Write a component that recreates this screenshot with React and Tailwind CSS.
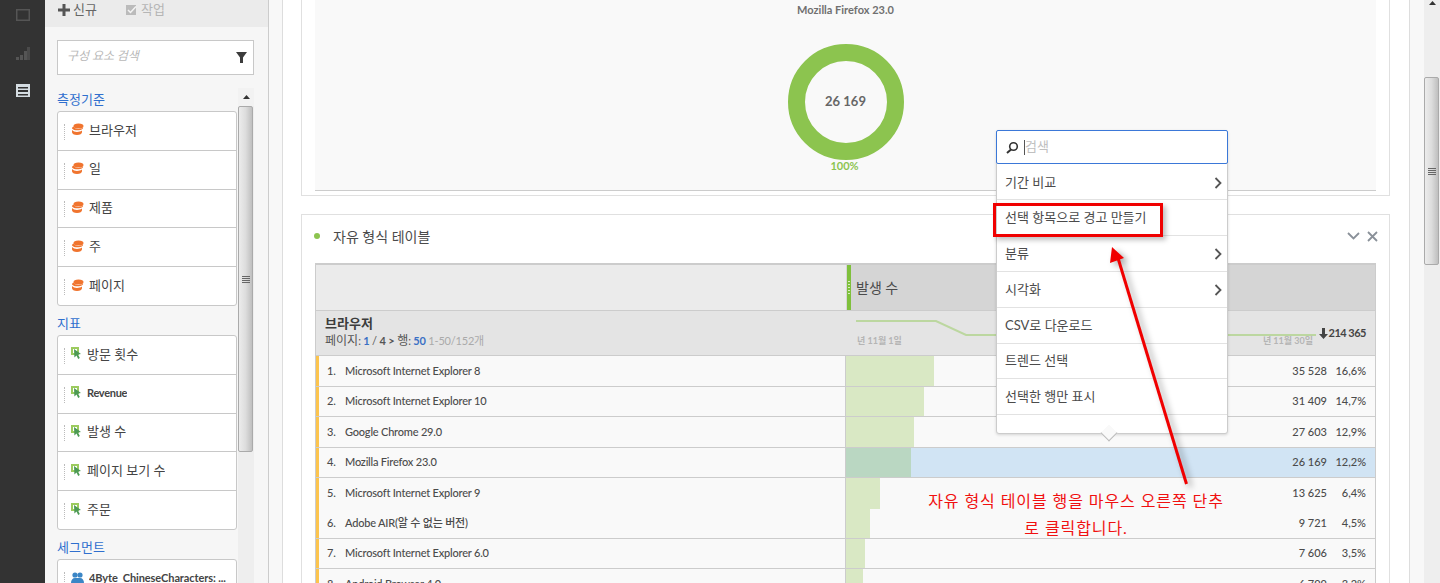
import React from "react";

const Db = () => (
  <svg width="13" height="12" viewBox="0 0 13 12" className="shrink-0">
    <ellipse cx="7.5" cy="3" rx="5" ry="2.6" fill="#f0742e" />
    <path d="M1 5.5c0-1 .8-1.6 1.6-1.9C3 5.2 5 6 7.5 6c2 0 3.6-.5 4.5-1.2v.6C10.600 7 8 7.300 6.500 7.300 4 7.300 2 6.800 1 5.500z" fill="#f0742e" />
    <path d="M1 7v2.300C1 10.800 3 12 6 12c3 0 5-1.200 5-2.800V7.500C9.500 8.500 8 8.900 6 8.900 4 8.900 2 8.300 1 7z" fill="#f0742e" />
  </svg>
);

const Cur = () => (
  <svg width="11" height="12" viewBox="0 0 11 12" className="shrink-0">
    <rect x="0" y="0" width="8" height="8" fill="#9ccb5e" />
    <rect x="2" y="2" width="4" height="4" fill="#ffffff" />
    <path d="M3 2l7 5-3 .6L8.800 11l-1.600.9L5.500 8.500 3.400 10.500z" fill="#4d9a55" />
  </svg>
);

const Seg = () => (
  <svg width="13" height="12" viewBox="0 0 13 12" className="shrink-0">
    <circle cx="4" cy="3" r="2.600" fill="#3b86c6" />
    <circle cx="9" cy="3" r="2.600" fill="#3b86c6" />
    <path d="M0 11c0-3 1.500-5 4-5h5c2.500 0 4 2 4 5z" fill="#3b86c6" />
  </svg>
);

const Item = ({ icon, label, textClass, last }) => (
  <div className={`flex items-center flex-1 min-h-0 pl-[6px] ${last ? "" : "border-b border-[#c8c8c8]"}`}>
    <span className="h-[16px] border-l border-dotted border-[#bbbbbb] mr-[6px] mt-[2px]" />
    <span className="-mt-[3px]">{icon}</span>
    <span className={`text-[#444444] truncate -mt-[1px] ${textClass}`}>{label}</span>
  </div>
);

const Section = ({ title, children, cls, boxCls }) => (
  <>
    <div className={`flex items-end shrink-0 text-[13px] text-[#2f6fce] pb-[2px] ${cls}`}>{title}</div>
    <div className={`bg-white border border-[#c8c8c8] rounded-[3px] flex flex-col shrink-0 ${boxCls}`}>{children}</div>
  </>
);

const rows = [
  ["1.", "Microsoft Internet Explorer 8", 88, "35 528", "16,6%", "h-[31px] border-b"],
  ["2.", "Microsoft Internet Explorer 10", 78, "31 409", "14,7%", "h-[30px] border-b"],
  ["3.", "Google Chrome 29.0", 68, "27 603", "12,9%", "h-[31px] border-b"],
  ["4.", "Mozilla Firefox 23.0", 65, "26 169", "12,2%", "h-[30px] border-b"],
  ["5.", "Microsoft Internet Explorer 9", 34, "13 625", "6,4%", "h-[31px]"],
  ["6.", "Adobe AIR(알 수 없는 버전)", 24, "9 721", "4,5%", "h-[30px] border-b"],
  ["7.", "Microsoft Internet Explorer 6.0", 19, "7 606", "3,5%", "h-[30px] border-b"],
  ["8.", "Android Browser 4.0", 17, "6 799", "3,2%", "h-[30px]"],
];

const menu = [
  ["기간 비교", true, "h-[33px]"],
  ["선택 항목으로 경고 만들기", false, "h-[36px]"],
  ["분류", true, "h-[36px]"],
  ["시각화", true, "h-[36px]"],
  ["CSV로 다운로드", false, "h-[36px]"],
  ["트렌드 선택", false, "h-[35px]"],
  ["선택한 행만 표시", false, "h-[36px]"],
];

const Chevron = () => (
  <svg width="8" height="12" viewBox="0 0 8 12" className="-ml-[1px] mr-[1px]">
    <path d="M1.500 1l5 5-5 5" fill="none" stroke="#555555" strokeWidth="1.800" />
  </svg>
);

const Thumb = ({ cls }) => (
  <div className={`rounded-[2px] border border-[#aaaaaa] bg-gradient-to-r from-[#ececec] via-[#dddddd] to-[#bfbfbf] flex items-center justify-center ${cls}`}>
    <div className="flex flex-col gap-[1px] mt-[1px]">
      <div className="w-[8px] h-[1px] bg-[#666666]" />
      <div className="w-[8px] h-[1px] bg-[#666666]" />
      <div className="w-[8px] h-[1px] bg-[#666666]" />
      <div className="w-[8px] h-[1px] bg-[#666666]" />
    </div>
  </div>
);

export default function App() {
  return (
    <div className="relative flex h-[583px] w-[1440px] overflow-hidden bg-white text-[12px] text-[#4b4b4b] font-['Lato','Noto_Sans_CJK_KR',sans-serif]">
      {/* rail */}
      <div className="w-[45px] shrink-0 bg-[#333333] flex flex-col items-center pt-[9px] gap-[25px]">
        <svg width="14" height="12" viewBox="0 0 14 12"><rect x=".75" y=".75" width="12.500" height="10.500" fill="none" stroke="#555555" strokeWidth="1.500" /></svg>
        <svg width="14" height="13" viewBox="0 0 14 13" className="mt-[1px]">
          <rect x="0" y="10" width="3" height="3" fill="#555555" />
          <rect x="4" y="8" width="3" height="5" fill="#555555" />
          <rect x="8" y="4" width="3" height="9" fill="#555555" />
          <rect x="11" y="0" width="3" height="13" fill="#4a4a4a" />
        </svg>
        <svg width="14" height="13" viewBox="0 0 14 13" className="mt-[-1px]">
          <rect x="0" y="0" width="14" height="13" fill="#d5dde2" />
          <rect x="2" y="3" width="10" height="1.500" fill="#333333" />
          <rect x="2" y="6" width="10" height="2" fill="#333333" />
          <rect x="2" y="10" width="10" height="1.500" fill="#333333" />
        </svg>
      </div>

      {/* sidebar */}
      <div className="w-[224px] shrink-0 bg-[#f6f6f6] border-r border-[#cccccc] flex flex-col">
        <div className="h-[27px] shrink-0 bg-[#ebebeb] flex items-start pl-[13px]">
          <div className="flex items-center text-[13px] text-[#666666]">
            <svg width="12" height="12" viewBox="0 0 12 12" className="mr-[3px]"><path d="M4.500 0h3v4.500H12v3H7.500V12h-3V7.500H0v-3h4.500z" fill="#555555" /></svg>
            신규
          </div>
          <div className="flex items-center text-[13px] text-[#b5b5b5] ml-[29px]">
            <svg width="11" height="10" viewBox="0 0 11 10" className="mr-[4px]"><rect width="10" height="10" fill="#bbbbbb" /><path d="M2 5l2.500 2.500L10 1.500" fill="none" stroke="#f3f3f3" strokeWidth="1.500" /></svg>
            작업
          </div>
        </div>
        <div className="pl-[12px] pt-[13px] w-[209px] shrink-0">
          <div className="h-[35px] bg-white border border-[#c8c8c8] flex items-center justify-between pl-[9px] pr-[6px]">
            <span className="italic text-[#b8b8b8] text-[12px] -mt-[3px]">구성 요소 검색</span>
            <svg width="11" height="11" viewBox="0 0 11 11"><path d="M0 0h11L7 5.500V11H4V5.500z" fill="#3c3c3c" /></svg>
          </div>
        </div>
        <div className="flex pl-[12px] pt-[13px] min-h-0 flex-1 overflow-hidden">
          <div className="w-[180px] shrink-0 flex flex-col">
            <Section title="측정기준" cls="h-[23px]" boxCls="h-[195px]">
              <Item icon={<Db />} label="브라우저" textClass="ml-[5px] text-[13px]" />
              <Item icon={<Db />} label="일" textClass="ml-[5px] text-[13px]" />
              <Item icon={<Db />} label="제품" textClass="ml-[5px] text-[13px]" />
              <Item icon={<Db />} label="주" textClass="ml-[5px] text-[13px]" />
              <Item icon={<Db />} label="페이지" textClass="ml-[5px] text-[13px]" last />
            </Section>
            <Section title="지표" cls="h-[29px]" boxCls="h-[195px]">
              <Item icon={<Cur />} label="방문 횟수" textClass="ml-[5px] text-[13px]" />
              <Item icon={<Cur />} label="Revenue" textClass="ml-[5px] text-[11px] font-bold tracking-[-0.3px]" />
              <Item icon={<Cur />} label="발생 수" textClass="ml-[5px] text-[13px]" />
              <Item icon={<Cur />} label="페이지 보기 수" textClass="ml-[5px] text-[13px]" />
              <Item icon={<Cur />} label="주문" textClass="ml-[5px] text-[13px]" last />
            </Section>
            <Section title="세그먼트" cls="h-[29px]" boxCls="h-[40px]">
              <Item icon={<Seg />} label="4Byte_ChineseCharacters: ..." textClass="ml-[5px] text-[11px] font-bold tracking-[-0.1px]" last />
            </Section>
          </div>
          <div className="w-[16px] ml-[1px] shrink-0 bg-[#eeeeee] flex flex-col">
            <div className="h-[18px] shrink-0 bg-[#f2f2f2] flex items-center justify-center">
              <svg width="7" height="4" viewBox="0 0 7 4"><path d="M3.500 0L7 4H0z" fill="#333333" /></svg>
            </div>
            <Thumb cls="h-[346px] w-[15px] shrink-0" />
          </div>
        </div>
      </div>

      {/* gutter */}
      <div className="w-[13px] shrink-0 bg-[#f8f8f8] border-r border-[#dddddd] box-content" />

      {/* main */}
      <div className="w-[1126px] shrink-0 pl-[18px] pr-[19px] flex flex-col">
        <div className="h-[196px] shrink-0 border border-t-0 border-[#e0e0e0] px-[13px] pb-[4px]">
          <div className="h-full bg-[#f9f9f9] border-b border-[#cccccc] flex flex-col items-center">
            <div className="text-[11px] font-bold text-[#707070] mt-[3px] leading-[14px]">Mozilla Firefox 23.0</div>
            <div className="relative w-[116px] h-[116px] mt-[27px] rounded-full border-[17px] border-[#8cc44f] flex items-center justify-center">
              <span className="text-[13px] font-bold text-[#666666]">26 169</span>
            </div>
            <div className="text-[11px] font-bold text-[#8cc44f] leading-[14px] -mt-[1px] -ml-[2px]">100%</div>
          </div>
        </div>
        <div className="mt-[18px] border border-[#e0e0e0] px-[13px] flex-1">
          <div className="h-[48px] flex items-center -mt-[3px]">
            <span className="w-[6px] h-[6px] rounded-full bg-[#8cc44f] mr-[14px] ml-[-1px]" />
            <span className="text-[14px] text-[#4b4b4b] ml-[-1px]">자유 형식 테이블</span>
            <span className="ml-auto flex items-center gap-[6px] mr-[-2px]">
              <svg width="13" height="8" viewBox="0 0 13 8" className="-ml-[1px] mr-[1px]"><path d="M1 1l5.500 5.500L12 1" fill="none" stroke="#8a9199" strokeWidth="1.800" /></svg>
              <svg width="11" height="11" viewBox="0 0 11 11"><path d="M1 1l9 9M10 1l-9 9" fill="none" stroke="#8a9199" strokeWidth="1.800" /></svg>
            </span>
          </div>
          <div className="w-[1061px] border-t-2 border-x border-[#cccccc] mt-[3px]">
            <div className="flex h-[46px] border-b border-[#cccccc]">
              <div className="w-[530px] shrink-0 bg-[#ebebeb]" />
              <div className="flex-1 bg-[#d5d5d5] flex items-center">
                <div className="w-[4px] ml-[1px] h-full bg-[#7fc03c] flex flex-col items-center justify-center gap-[2px]">
                  {[0, 1, 2, 3, 4].map((k) => <span key={k} className="w-[2px] h-[1px] bg-[#d8eec0]" />)}
                </div>
                <span className="text-[14px] ml-[5px] -mt-[1px] text-[#4b4b4b]">발생 수</span>
              </div>
            </div>
            <div className="flex h-[45px] bg-[#e4e4e4] border-b border-[#cccccc]">
              <div className="w-[530px] shrink-0 pl-[9px] pt-[4px]">
                <div className="text-[13px] font-bold leading-[16px] text-[#3c3c3c]">브라우저</div>
                <div className="text-[11px] leading-[16px] mt-[2px] text-[#555555] whitespace-nowrap tracking-[-0.2px]">
                  <span className="text-[12px] tracking-normal">페이지</span>: <span className="text-[#3b70c4] font-bold">1</span> / <span className="font-bold">4</span> <span className="font-bold">&gt;</span> <span className="text-[12px] tracking-normal">행</span>: <span className="text-[#3b70c4] font-bold">50</span> <span className="text-[#aaaaaa]">1-50/152개</span>
                </div>
              </div>
              <div className="relative flex-1">
                <svg width="460" height="30" viewBox="0 0 460 30" className="absolute left-[10px] top-[4px]">
                  <path d="M0 6H80L110 20H460" fill="none" stroke="#bcd7a0" strokeWidth="2" />
                </svg>
                <span className="absolute left-[11px] top-[23px] text-[9px] font-bold text-[#b5b5b5] leading-[14px]">년 11월 1일</span>
                <span className="absolute right-[62px] top-[23px] text-[9px] font-bold text-[#b5b5b5] leading-[14px]">년 11월 30일</span>
                <span className="absolute right-[9px] top-[14px] flex items-center text-[11px] font-bold tracking-[-0.5px] text-[#444444] leading-[16px]">
                  <svg width="9" height="11" viewBox="0 0 9 11" className="mr-[1px]"><path d="M3 0h3v6h3L4.500 11 0 6h3z" fill="#444444" /></svg>
                  214 365
                </span>
              </div>
            </div>
            {rows.map((r, i) => (
              <div key={i} className={`flex border-[#cccccc] ${r[5]} ${i === 3 ? "bg-[#d1e4f4]" : "bg-[#f9f9f9]"}`}>
                <div className="w-[529px] shrink-0 border-l-[3px] border-[#fcc44d] bg-[#f9f9f9] flex items-center pl-[8px]">
                  <span className="w-[18px] text-[11px] font-medium tracking-[-0.2px]">{r[0]}</span>
                  <span className="text-[11px] font-medium tracking-[-0.2px]">{r[1]}</span>
                </div>
                <div className="flex-1 flex border-l border-[#cccccc]">
                  <div className={`${i === 3 ? "bg-[#bad7c2]" : "bg-[#d9e8c4]"} shrink-0`} style={{ width: r[2] }} />
                  <div className="flex-1 flex items-center justify-end pr-[9px] text-[11px] font-medium">
                    <span>{r[3]}</span>
                    <span className="w-[39px] text-right">{r[4]}</span>
                  </div>
                </div>
              </div>
            ))}
          </div>
        </div>
      </div>

      {/* right gutter + page scrollbar */}
      <div className="flex-1 flex border-l border-[#dddddd]">
        <div className="w-[14px] bg-[#f8f8f8]" />
        <div className="flex-1 bg-[#eeeeee] flex flex-col">
          <div className="h-[77px] flex justify-center pt-[1px]">
            <svg width="7" height="4" viewBox="0 0 7 4"><path d="M3.500 0L7 4H0z" fill="#333333" /></svg>
          </div>
          <Thumb cls="h-[188px] w-[15px]" />
        </div>
      </div>

      {/* context menu */}
      <div className="absolute left-[996px] top-[130px] w-[232px] h-[304px] bg-white border border-[#cccccc] rounded-[3px] shadow-[0_1px_3px_rgba(0,0,0,0.15)] flex flex-col">
        <div className="h-[34px] shrink-0 mx-[-1px] mt-[-1px] border border-[#3b78d8] rounded-[2px] flex items-center pl-[9px] bg-white">
          <svg width="13" height="13" viewBox="0 0 13 13"><circle cx="7.500" cy="5.500" r="3.800" fill="none" stroke="#333333" strokeWidth="1.600" /><path d="M5 8.500L1 12" stroke="#333333" strokeWidth="2" /></svg>
          <span className="ml-[5px] w-[1px] h-[15px] bg-[#555555]" />
          <span className="text-[13px] text-[#c0c0c0]">검색</span>
        </div>
        <div className="h-[3px] shrink-0" />
        {menu.map(([label, sub, h], i) => (
          <div key={i} className={`${h} shrink-0 border-b border-[#e2e2e2] flex items-center justify-between pl-[8px] pr-[4px] text-[13px] text-[#4b4b4b]`}>
            <span>{label}</span>
            {sub && <Chevron />}
          </div>
        ))}
        <div className="absolute left-[106px] top-[296px] w-[12px] h-[12px] rotate-45 bg-[#f9f9f9] border-r border-b border-[#bbbbbb]" />
      </div>

      {/* annotation */}
      <div className="absolute left-[993px] top-[203px] w-[170px] h-[34px] border-[3px] border-[#f00000] shadow-[3px_3px_5px_rgba(0,0,0,0.25)]" />
      <svg width="120" height="250" viewBox="0 0 120 250" className="absolute left-[1090px] top-[240px] drop-shadow-[4px_3px_3px_rgba(0,0,0,0.35)]">
        <path d="M96.500 244L28 18" fill="none" stroke="#f00000" strokeWidth="3" />
        <path d="M22 7L20 23 34 18z" fill="#f00000" />
      </svg>
      <div className="absolute left-[926px] top-[487px] w-[300px] text-center text-[16px] leading-[27px] tracking-[0.9px] text-[#f01010]">
        자유 형식 테이블 행을 마우스 오른쪽 단추<br />로 클릭합니다.
      </div>
    </div>
  );
}
